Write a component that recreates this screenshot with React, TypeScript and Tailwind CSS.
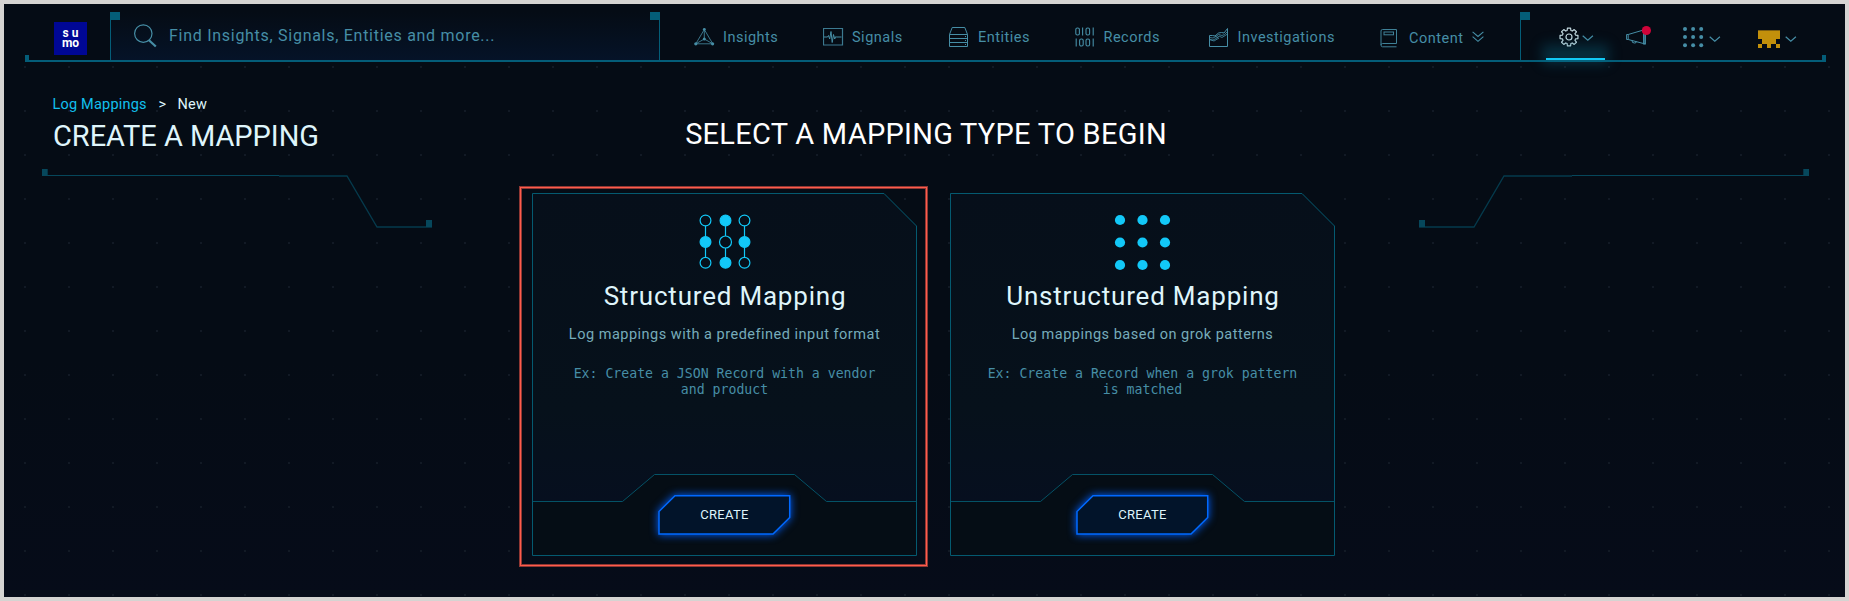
import type { ReactNode } from "react";

const line = "#468ea6";

function InsightsIcon() {
  return (
    <svg width="21" height="20" viewBox="0 0 21 20" fill="none" stroke={line} strokeWidth="0.8">
      <path d="M10.3 2.5L1.8 16.8H18.8ZM10.3 2.5V12L1.8 16.8M10.3 12L18.8 16.8" />
      <g fill={line} stroke="none">
        <circle cx="10.3" cy="2.3" r="1.4" />
        <circle cx="1.8" cy="16.8" r="1.6" />
        <circle cx="18.6" cy="16.8" r="1.6" />
        <circle cx="10.3" cy="12" r="1.5" />
      </g>
    </svg>
  );
}

function SignalsIcon() {
  return (
    <svg width="21" height="20" viewBox="0 0 21 20" fill="none" stroke={line} strokeWidth="1">
      <path d="M0.5 1.5H19.5V18H0.5Z" strokeWidth="1.2" opacity="0.85" />
      <path d="M1 10H4.5L5.5 8.5L6.7 12L8 4.5L9.2 15.5L10.5 7.5L11.7 12L12.8 9.5L13.5 10H18.5" />
    </svg>
  );
}

function EntitiesIcon() {
  return (
    <svg width="20" height="21" viewBox="0 0 20 21" fill="none" stroke={line} strokeWidth="1">
      <path d="M0.5 7.5L3.2 0.5H15.8L18.5 7.5V19.5H0.5ZM0.5 7.5H18.5M0.5 11.5H18.5M0.5 15.5H18.5M16 9.5H17M16 13.5H17M16 17.5H17" />
    </svg>
  );
}

function RecordsIcon() {
  return (
    <svg width="20" height="20" viewBox="0 0 20 20" fill="none" stroke={line} strokeWidth="1.1">
      <rect x="0.8" y="1" width="3.6" height="7" rx="1.6" />
      <path d="M7.6 0.5V8.5M18.2 0.5V8.5M1.2 11.5V19.5M18.2 11.5V19.5" />
      <rect x="11" y="1" width="3.6" height="7" rx="1.6" />
      <rect x="4.6" y="12" width="3.6" height="7" rx="1.6" />
      <rect x="11" y="12" width="3.6" height="7" rx="1.6" />
    </svg>
  );
}

function InvestigationsIcon() {
  return (
    <svg width="20" height="20" viewBox="0 0 20 20" fill="none" stroke={line} strokeWidth="1">
      <path d="M0.5 8.5V19.5H18.5V1.5L15 6L12.5 5.5L9.5 6L6 9L3.5 8.5L0.5 8.5" />
      <path d="M0.5 10.5L4 11L7 9.5L9.5 7.5L13 8.5L15.5 7.5L18.5 4.5M0.5 12.5L4 13L7 11.5L10 9L13 10.5L18.5 7M0.5 12.5L5 14L10 11M6 9L9.5 11" strokeWidth="0.8" />
    </svg>
  );
}

function ContentIcon() {
  return (
    <svg width="18" height="20" viewBox="0 0 18 20" fill="none" stroke={line} strokeWidth="1" opacity="0.9">
      <path d="M16.5 1.5H2.5Q1 1.5 1 3V17Q1 18.8 2.5 18.8H16.5M16.5 1.5V15.5H2.5Q1 15.5 1 17" />
      <rect x="4" y="4" width="9.5" height="2.8" />
    </svg>
  );
}

function Chevron() {
  return (
    <svg width="12" height="7" viewBox="0 0 12 7" fill="none" stroke={line} strokeWidth="1.2">
      <path d="M0.7 0.8L5.8 5.3L10.9 0.8" />
    </svg>
  );
}

function DoubleChevron() {
  return (
    <svg width="12" height="12" viewBox="0 0 12 12" fill="none" stroke={line} strokeWidth="1.1">
      <path d="M0.6 0.8L6 5.5L11.4 0.8M0.6 5.6L6 10.3L11.4 5.6" />
    </svg>
  );
}

function GearIcon() {
  const teeth = Array.from({ length: 8 }, (_, i) => {
    const point = (r: number, deg: number) => {
      const a = ((i * 45 + deg) * Math.PI) / 180;
      return `${(10 + r * Math.sin(a)).toFixed(2)} ${(10 - r * Math.cos(a)).toFixed(2)}`;
    };
    return `${i ? "L" : "M"}${point(6.8, -16)}L${point(9.1, -10)}L${point(9.1, 10)}L${point(6.8, 16)}`;
  });
  return (
    <svg width="20" height="20" viewBox="0 0 20 20" fill="none" stroke="#c3d9e0" strokeWidth="1.2" strokeLinejoin="round">
      <path d={teeth.join("") + "Z"} />
      <circle cx="10" cy="10" r="3" />
    </svg>
  );
}

function MegaphoneIcon() {
  return (
    <svg width="26" height="24" viewBox="0 0 26 24" fill="none" stroke={line} strokeWidth="1">
      <path d="M0.6 9.5V14.5H2.2V9.5ZM2.2 9.5L17.5 5M2.2 14.5L18.5 18.8M6 15.3Q5.8 18.2 8.5 18Q10.5 18 10.5 16.5" />
      <rect x="17.6" y="5" width="1.8" height="14" fill="#28627a" />
      <circle cx="20.4" cy="5.5" r="4.6" fill="#cf0439" stroke="none" />
    </svg>
  );
}

function AppsIcon() {
  const pos = [2, 10.1, 18.2];
  return (
    <svg width="21" height="21" viewBox="0 0 21 21" fill="#468ea6">
      {pos.map((y) => pos.map((x) => <circle key={`${x}-${y}`} cx={x} cy={y} r="2" />))}
    </svg>
  );
}

function AvatarIcon() {
  return (
    <svg width="22" height="18" viewBox="0 0 22 18" shapeRendering="crispEdges" fill="#c2900b">
      <path d="M0 0H22V9H18V14H22V18H18V14H13V18H9V14H4V18H0V14H4V9H0Z" />
      <path d="M0 0H22V1H0Z" fill="#7d5f10" />
    </svg>
  );
}

function NavItem({ icon, label, className }: { icon: ReactNode; label: string; className: string }) {
  return (
    <a className={`flex items-center ${className}`}>
      <span className="flex w-[29px] shrink-0">{icon}</span>
      <span className="pt-[2px] text-[14.5px] tracking-[0.5px] text-[#468ea6]">{label}</span>
    </a>
  );
}

function Header() {
  return (
    <header className="flex h-[58px] bg-[#050c15] px-[21px]">
      <div className="flex w-[1801px] border-b-2 border-[#045d78]">
        <div className="h-[5px] w-1 self-end bg-[#045d78]" />
        <div className="w-[81px] pt-[18px] pl-[25px]">
          <div className="h-[33px] w-[33px] bg-[#000795] pt-[6px] text-center text-[12px] leading-[10px] font-bold whitespace-pre-line text-white">
            {"s u\nmo"}
          </div>
        </div>
        <div className="relative mt-2 flex w-[550px] items-center border-x border-[#045d78] bg-linear-to-b from-[#050c15] to-[#051328] pl-[23px]">
          <div className="absolute top-0 left-0 h-2 w-[9px] bg-[#045d78]" />
          <div className="absolute top-0 right-0 h-2 w-[9px] bg-[#045d78]" />
          <svg width="24" height="24" viewBox="0 0 24 24" fill="none" stroke={line} strokeWidth="1.2">
            <circle cx="9.3" cy="9.6" r="8.7" />
            <path d="M15 16.2L21.8 22.5" strokeWidth="2.2" />
          </svg>
          <span className="pl-[11px] text-[16px] tracking-[0.72px] text-[#468ea6]">
            Find Insights, Signals, Entities and more...
          </span>
        </div>
        <nav className="flex w-[860px] items-center pt-[10px] pl-[34px]">
          <NavItem icon={<InsightsIcon />} label="Insights" className="w-[129px]" />
          <NavItem icon={<SignalsIcon />} label="Signals" className="w-[126px]" />
          <NavItem icon={<EntitiesIcon />} label="Entities" className="w-[125.5px]" />
          <NavItem icon={<RecordsIcon />} label="Records" className="w-[134px]" />
          <NavItem icon={<InvestigationsIcon />} label="Investigations" className="w-[171.5px]" />
          <NavItem icon={<ContentIcon />} label="Content" className="w-[92px] pt-px" />
          <DoubleChevron />
        </nav>
        <div className="relative mt-2 flex w-[302px] items-stretch border-l border-[#045d78]">
          <div className="absolute top-0 left-0 h-2 w-[9px] bg-[#045d78]" />
          <div className="relative ml-[25px] flex w-[59px] items-center border-b-2 border-[#12c8f4] pl-[13px]">
            <div className="absolute right-0 -bottom-1 left-0 h-3 bg-[#0b7796]/30 shadow-[0_-2px_8px_4px_rgba(11,119,150,0.28)] blur-[4px]" />
            <div className="absolute right-0 -bottom-[2px] left-0 h-[2px] bg-[#12c8f4]" />
            <span className="pt-[3px]"><GearIcon /></span>
            <span className="pt-1.5 pl-[3px]"><Chevron /></span>
          </div>
          <div className="w-[78px] pt-[13px] pl-[20.5px]"><MegaphoneIcon /></div>
          <div className="flex w-[75px] pt-[15px]">
            <AppsIcon />
            <span className="pt-[9px] pl-[5px]"><Chevron /></span>
          </div>
          <div className="flex pt-[18px]">
            <AvatarIcon />
            <span className="pt-[6px] pl-[5px]"><Chevron /></span>
          </div>
        </div>
        <div className="h-[5px] w-1 self-end bg-[#045d78]" />
      </div>
    </header>
  );
}

function Bracket({ className }: { className: string }) {
  return (
    <svg width="390" height="60" viewBox="0 0 390 60" fill="none" stroke="#06475b" className={className}>
      <path d="M0 7.5H237" />
      <path d="M237 8H305L335 59H390" stroke="#053a4c" strokeWidth="1.3" />
      <path d="M0 1H5.7V8H0ZM384 52H390V59H384Z" fill="#06475b" stroke="none" />
    </svg>
  );
}

function CreateButton() {
  return (
    <button className="relative flex h-[40px] w-[133px] items-center justify-center">
      <svg width="133" height="40" viewBox="0 0 133 40" className="absolute inset-0 overflow-visible drop-shadow-[0_0_4px_#0060ff]">
        <path d="M17 0.7H131.7V22.5L115 39H1V16.5Z" fill="#02142a" stroke="#0069ff" strokeWidth="1.5" />
      </svg>
      <span className="relative text-[13px] tracking-[0.3px] text-[#dff5fb]">CREATE</span>
    </button>
  );
}

function MappingCard({ icon, title, text, example }: { icon: ReactNode; title: string; text: string; example: string }) {
  return (
    <article className="relative flex h-[363px] w-[385px] flex-col items-center">
      <svg width="385" height="363" viewBox="0 0 385 363" className="absolute inset-0">
        <defs>
          <linearGradient id="panel" x1="0" y1="0" x2="0" y2="1">
            <stop offset="0" stopColor="#060f1a" />
            <stop offset="0.7" stopColor="#06111b" />
            <stop offset="1" stopColor="#060f1f" />
          </linearGradient>
        </defs>
        <path d="M0.5 0.5H352L384.5 33V308.5H294.5L262.5 281.5H122.5L90.5 308.5H0.5Z" fill="url(#panel)" />
        <path d="M0.5 308.5H90.5L122.5 281.5H262.5L294.5 308.5H384.5V362.5H0.5Z" fill="#050d15" />
        <path d="M0.5 308.5H90.5L122.5 281.5H262.5L294.5 308.5H384.5" fill="none" stroke="#045266" />
        <path d="M0.5 0.5H352L384.5 33V362.5H0.5Z" fill="none" stroke="#045a70" />
      </svg>
      <div className="relative mt-[21px] flex h-[57px]">{icon}</div>
      <h2 className="relative mt-[7px] pl-px text-[26px] leading-[36px] tracking-[0.8px] text-[#dff5fb]">{title}</h2>
      <p className="relative mt-[11px] text-[14.5px] leading-[20px] tracking-[0.5px] text-[#76acba]">{text}</p>
      <p className="relative mt-[20.5px] w-[330px] text-center font-['DejaVu_Sans_Mono',monospace] text-[13.2px] leading-[16px] text-[#468ea6]">
        {example}
      </p>
      <div className="absolute bottom-[21px] left-[126px]"><CreateButton /></div>
    </article>
  );
}

function StructuredIcon() {
  const cols = [6.5, 26.5, 45.5];
  const rows = [6.5, 28, 48.8];
  return (
    <svg width="52" height="56" viewBox="0 0 52 56" stroke="#12c8f8" strokeWidth="1.2">
      {cols.map((x) => <path key={x} d={`M${x} 6.5V48.8`} />)}
      {cols.map((x, i) =>
        rows.map((y, j) => (
          <circle key={`${i}${j}`} cx={x} cy={y} r={i === 1 && j === 1 ? 6 : 5.4} fill={(i + j) % 2 ? "#12c8f8" : "#060f1a"} />
        ))
      )}
    </svg>
  );
}

function UnstructuredIcon() {
  const pos = [6, 28.5, 51];
  return (
    <svg width="57" height="57" viewBox="0 0 57 57" fill="#12c8f8">
      {pos.map((y) => pos.map((x) => <circle key={`${x}-${y}`} cx={x} cy={y} r="5.1" />))}
    </svg>
  );
}

export default function App() {
  return (
    <div className="h-[601px] w-[1849px] overflow-hidden border-4 border-[#d5d4d2] bg-[#050c15] font-['Roboto',sans-serif]">
      <div className="flex h-[593px] flex-col bg-[radial-gradient(circle_at_center,#121a25_1px,transparent_1px),linear-gradient(#050c15_60%,#060c19)] bg-[size:44px_44px,100%_100%] bg-[position:-1px_41px,0_0]">
        <Header />
        <main className="flex flex-1">
          <section className="ml-[38px] w-[392px] pt-[32px]">
            <div className="flex pl-[10.5px] text-[14.5px] leading-[22px] tracking-[0.2px] whitespace-pre text-[#dff5fb]">
              <a className="w-[106px] text-[#12c0ee]">Log Mappings</a>
              <span className="w-[19px]">&gt;</span>
              <span>New</span>
            </div>
            <h1 className="pt-[2px] pl-[11px] text-[29px] leading-[36px] tracking-[-0.05px] text-[#dff5fb]">CREATE A MAPPING</h1>
            <Bracket className="mt-[14px]" />
          </section>
          <section className="ml-[85px] w-[817px] pt-[54px]">
            <h1 className="pr-[3px] text-center text-[29px] leading-[36px] tracking-[0.27px] text-white">
              SELECT A MAPPING TYPE TO BEGIN
            </h1>
            <div className="flex pt-[34px]">
              <div className="h-[381px] w-[409px] border border-[#8f3733]">
                <div className="h-full border border-[#ff5c4c]">
                  <div className="h-full border border-[#8f3733] pt-[4px] pl-[10px]">
                    <MappingCard
                      icon={<StructuredIcon />}
                      title="Structured Mapping"
                      text="Log mappings with a predefined input format"
                      example="Ex: Create a JSON Record with a vendor and product"
                    />
                  </div>
                </div>
              </div>
              <div className="pt-[7px] pl-[22px]">
                <MappingCard
                  icon={<UnstructuredIcon />}
                  title="Unstructured Mapping"
                  text="Log mappings based on grok patterns"
                  example="Ex: Create a Record when a grok pattern is matched"
                />
              </div>
            </div>
          </section>
          <section className="ml-[83px] pt-[106px]">
            <Bracket className="-scale-x-100" />
          </section>
        </main>
      </div>
    </div>
  );
}
